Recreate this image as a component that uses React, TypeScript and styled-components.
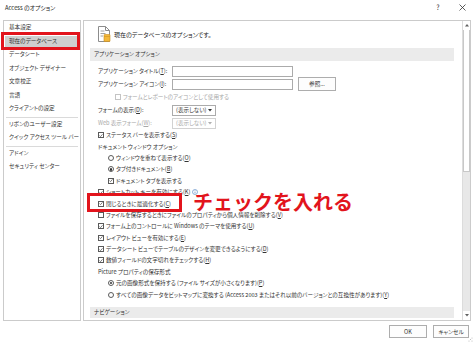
import React from 'react';
import styled, { createGlobalStyle } from 'styled-components';

const Global = createGlobalStyle`
  html, body { margin: 0; padding: 0; background: #fff; }
  body {
    font-family: "Noto Sans CJK JP", "Noto Sans", sans-serif;
    font-feature-settings: "palt";
    color: #333;
  }
  * { box-sizing: border-box; }
  u { text-underline-offset: 0.5px; }
`;

const Window = styled.div`
  width: 474px;
  height: 343px;
  display: flex;
  flex-direction: column;
  background: #fff;
  overflow: hidden;
  position: relative;
`;

const TitleBar = styled.div`
  height: 20px;
  flex: none;
  display: flex;
  align-items: flex-start;
  padding: 3px 0 0 5px;
  font-size: 5.8px;
  line-height: 9px;
  color: #222;
  white-space: nowrap;
`;

const TitleText = styled.div`
  flex: 1;
`;

const TitleButton = styled.div<{ $w: number }>`
  width: ${(p) => p.$w}px;
  height: 9px;
  display: flex;
  align-items: center;
  justify-content: center;
  font-size: 7px;
  color: #333;
`;

const Body = styled.div`
  height: 301px;
  flex: none;
  display: flex;
  gap: 2px;
  padding: 0 3px;
`;

const Sidebar = styled.div`
  width: 78px;
  flex: none;
  border: 1px solid #cbcbcb;
  display: flex;
  flex-direction: column;
  gap: 2.5px;
  padding-top: 1px;
  font-size: 5.6px;
  position: relative;
`;

const NavItem = styled.div<{ $selected?: boolean }>`
  height: 11px;
  line-height: 11px;
  margin: 0 1px;
  padding-left: 4px;
  white-space: nowrap;
  position: relative;
  color: #333;
  background: ${(p) => (p.$selected ? '#cfcfcf' : 'transparent')};
`;

const NavSeparator = styled.div`
  height: 1px;
  margin: 0 2px -1.5px 2px;
  background: #dadada;
`;

const RedBox = styled.div<{ $l: number; $t: number; $w: number; $h: number }>`
  position: absolute;
  left: ${(p) => p.$l}px;
  top: ${(p) => p.$t}px;
  width: ${(p) => p.$w}px;
  height: ${(p) => p.$h}px;
  border: 3px solid #e2141c;
  pointer-events: none;
`;

const Content = styled.div`
  flex: 1;
  border: 1px solid #cbcbcb;
  display: flex;
  overflow: hidden;
`;

const ScrollArea = styled.div`
  flex: 1;
  padding: 0 8px 0 6px;
  overflow: hidden;
  font-size: 5.6px;
  white-space: nowrap;
`;

const Header = styled.div`
  height: 25px;
  margin-bottom: 2px;
  display: flex;
  align-items: center;
  gap: 3px;
  padding-left: 7px;
  padding-top: 1px;
  font-size: 6px;
  color: #222;
`;

const Band = styled.div<{ $h: number }>`
  height: ${(p) => p.$h}px;
  line-height: ${(p) => p.$h}px;
  background: #ebebeb;
  padding-left: 4px;
  color: #333;
`;

const Form = styled.div`
  padding: 3.5px 0 0 8px;
`;

const FieldRow = styled.div`
  height: 13px;
  display: flex;
  align-items: center;
`;

const Label = styled.div<{ $disabled?: boolean }>`
  width: 74px;
  flex: none;
  color: ${(p) => (p.$disabled ? '#a8a8a8' : '#333')};
`;

const TextInput = styled.div`
  width: 121px;
  height: 11px;
  border: 1px solid #ababab;
  background: #fff;
`;

const PushButton = styled.div<{ $w: number; $ml?: number }>`
  width: ${(p) => p.$w}px;
  height: ${(p) => (p.$ml ? 14 : 13)}px;
  margin-left: ${(p) => p.$ml ?? 0}px;
  border: 1px solid #adadad;
  background: #fdfdfd;
  display: flex;
  align-items: center;
  justify-content: center;
  font-size: 5.6px;
  color: #333;
`;

const Select = styled.div<{ $disabled?: boolean }>`
  width: 44px;
  height: 11px;
  border: 1px solid ${(p) => (p.$disabled ? '#d2d2d2' : '#ababab')};
  display: flex;
  align-items: center;
  justify-content: space-between;
  padding: 0 3px 0 3px;
  color: ${(p) => (p.$disabled ? '#a8a8a8' : '#333')};
`;

const Row = styled.div<{ $indent: number; $disabled?: boolean }>`
  height: 11.4px;
  display: flex;
  align-items: center;
  padding-left: ${(p) => p.$indent}px;
  gap: 2px;
  position: relative;
  color: ${(p) => (p.$disabled ? '#a8a8a8' : '#333')};
`;

const Text = styled.span``;

const Box = styled.span<{ $disabled?: boolean }>`
  width: 6px;
  height: 6px;
  flex: none;
  border: 1px solid ${(p) => (p.$disabled ? '#c4c4c4' : '#5a5a5a')};
  background: #fff;
  display: flex;
  align-items: center;
  justify-content: center;
`;

const Round = styled(Box)`
  border-radius: 50%;
`;

const Dot = styled.span`
  width: 2.4px;
  height: 2.4px;
  border-radius: 50%;
  background: #333;
`;

const Annotation = styled.div`
  position: absolute;
  left: 95px;
  top: -3.6px;
  font-size: 20px;
  line-height: 16px;
  font-weight: 700;
  letter-spacing: 0;
  color: #e2141c;
  font-feature-settings: normal;
`;

const Scrollbar = styled.div`
  width: 8px;
  flex: none;
  display: flex;
  flex-direction: column;
  background: #e8e8e8;
  border-left: 1px solid #dcdcdc;
`;

const Arrow = styled.div`
  height: 9px;
  flex: none;
  background: #fff;
  display: flex;
  align-items: center;
  justify-content: center;
`;

const Thumb = styled.div`
  height: 142px;
  flex: none;
  background: #fff;
  border: 1px solid #c8c8c8;
  border-top: none;
`;

const Track = styled.div`
  flex: 1;
`;

const Footer = styled.div`
  height: 22px;
  flex: none;
  display: flex;
  justify-content: flex-end;
  align-items: flex-start;
  gap: 6px;
  padding: 4px 5px 0 0;
`;

const Grip = styled.svg`
  position: absolute;
  right: 1px;
  bottom: 1px;
`;

const Check = ({ on = true, disabled }: { on?: boolean; disabled?: boolean }) => (
  <Box $disabled={disabled}>
    {on && (
      <svg width="5" height="5" viewBox="0 0 5 5">
        <polyline points="0.6,2.6 1.9,3.9 4.4,1" fill="none" stroke="#333" strokeWidth="0.8" />
      </svg>
    )}
  </Box>
);

const Radio = ({ on }: { on?: boolean }) => <Round>{on && <Dot />}</Round>;

const Key = ({ k }: { k: string }) => (
  <>
    (<u>{k}</u>)
  </>
);

const navTop = ['基本設定', '現在のデータベース', 'データシート', 'オブジェクト デザイナー', '文章校正', '言語', 'クライアントの設定'];

export default function App() {
  return (
    <Window>
      <Global />
      <TitleBar>
        <TitleText>Access のオプション</TitleText>
        <TitleButton $w={12}>?</TitleButton>
        <TitleButton $w={12} style={{ marginLeft: 12, marginRight: 6 }}>
          <svg width="7" height="7" viewBox="0 0 7 7">
            <path d="M0.5 0.5L6.5 6.5M6.5 0.5L0.5 6.5" stroke="#333" strokeWidth="0.8" />
          </svg>
        </TitleButton>
      </TitleBar>
      <Body>
        <Sidebar>
          {navTop.map((n, i) => (
            <NavItem key={n} $selected={i === 1}>
              {n}
              {i === 1 && <RedBox $l={-4} $t={-3.5} $w={79} $h={18} />}
            </NavItem>
          ))}
          <NavSeparator />
          <NavItem>リボンのユーザー設定</NavItem>
          <NavItem>クイック アクセス ツール バー</NavItem>
          <NavSeparator />
          <NavItem>アドイン</NavItem>
          <NavItem>セキュリティ センター</NavItem>
        </Sidebar>
        <Content>
          <ScrollArea>
            <Header>
              <svg width="14" height="16" viewBox="0 0 14 16">
                <path d="M1.5 0.5h7l4 4v11h-11z" fill="#fff" stroke="#8c8c8c" />
                <path d="M8.5 0.5v4h4" fill="none" stroke="#8c8c8c" />
                <path d="M3.5 5h4M3.5 7.5h5M3.5 10h2.5" stroke="#a0a0a0" />
                <rect x="7" y="8.5" width="6" height="7" rx="0.6" fill="#f3b83a" stroke="#c98d1c" strokeWidth="0.6" />
                <path d="M7 10.5h6" stroke="#c98d1c" strokeWidth="0.5" />
              </svg>
              <span>現在のデータベースのオプションです。</span>
            </Header>
            <Band $h={13}>アプリケーション オプション</Band>
            <Form>
              <FieldRow>
                <Label>アプリケーション タイトル<Key k="T" />:</Label>
                <TextInput />
              </FieldRow>
              <FieldRow>
                <Label>アプリケーション アイコン<Key k="I" />:</Label>
                <TextInput />
                <PushButton $w={38} $ml={5}>参照...</PushButton>
              </FieldRow>
              <FieldRow>
                <Row $indent={17} $disabled>
                  <Check on={false} disabled />
                  <Text>フォームとレポートのアイコンとして使用する</Text>
                </Row>
              </FieldRow>
              <FieldRow>
                <Label>フォームの表示<Key k="D" />:</Label>
                <Select>
                  <span>(表示しない)</span>
                  <svg width="4" height="3" viewBox="0 0 4 3"><path d="M0 0h4L2 2.5z" fill="#333" /></svg>
                </Select>
              </FieldRow>
              <FieldRow>
                <Label $disabled>Web 表示フォーム<Key k="W" />:</Label>
                <Select $disabled>
                  <span>(表示しない)</span>
                  <svg width="4" height="3" viewBox="0 0 4 3"><path d="M0 0h4L2 2.5z" fill="#b0b0b0" /></svg>
                </Select>
              </FieldRow>
              <Row $indent={0}><Check /><Text>ステータス バーを表示する<Key k="S" /></Text></Row>
              <Row $indent={0}><Text>ドキュメント ウィンドウ オプション</Text></Row>
              <Row $indent={10}><Radio /><Text>ウィンドウを重ねて表示する<Key k="O" /></Text></Row>
              <Row $indent={10}><Radio on /><Text>タブ付きドキュメント<Key k="B" /></Text></Row>
              <Row $indent={10}><Check /><Text>ドキュメント タブを表示する</Text></Row>
              <Row $indent={0}>
                <Check />
                <Text>ショートカット キーを有効にする<Key k="K" /></Text>
                <svg width="6" height="6" viewBox="0 0 6 6">
                  <circle cx="3" cy="3" r="2.5" fill="none" stroke="#4a7fc1" strokeWidth="0.6" />
                  <path d="M3 2.6v1.8M3 1.5v0.5" stroke="#4a7fc1" strokeWidth="0.7" />
                </svg>
              </Row>
              <Row $indent={0}>
                <Check />
                <Text>閉じるときに最適化する<Key k="C" /></Text>
                <RedBox $l={-11} $t={-5} $w={95} $h={19} />
                <Annotation>チェックを入れる</Annotation>
              </Row>
              <Row $indent={0}><Check on={false} /><Text>ファイルを保存するときにファイルのプロパティから個人情報を削除する<Key k="V" /></Text></Row>
              <Row $indent={0}><Check /><Text>フォーム上のコントロールに Windows のテーマを使用する<Key k="U" /></Text></Row>
              <Row $indent={0}><Check /><Text>レイアウト ビューを有効にする<Key k="E" /></Text></Row>
              <Row $indent={0}><Check /><Text>データシート ビューでテーブルのデザインを変更できるようにする<Key k="D" /></Text></Row>
              <Row $indent={0}><Check /><Text>数値フィールドの文字切れをチェックする<Key k="H" /></Text></Row>
              <Row $indent={0}><Text>Picture プロパティの保存形式</Text></Row>
              <Row $indent={10}><Radio on /><Text>元の画像形式を保持する (ファイル サイズが小さくなります)<Key k="P" /></Text></Row>
              <Row $indent={10}><Radio /><Text>すべての画像データをビットマップに変換する (Access 2003 またはそれ以前のバージョンとの互換性があります)<Key k="Y" /></Text></Row>
            </Form>
            <div style={{ height: 6.5 }} />
            <Band $h={11}>ナビゲーション</Band>
          </ScrollArea>
          <Scrollbar>
            <Arrow>
              <svg width="4" height="3" viewBox="0 0 4 3"><path d="M0 2.5h4L2 0z" fill="#606060" /></svg>
            </Arrow>
            <Thumb />
            <Track />
            <Arrow>
              <svg width="4" height="3" viewBox="0 0 4 3"><path d="M0 0h4L2 2.5z" fill="#606060" /></svg>
            </Arrow>
          </Scrollbar>
        </Content>
      </Body>
      <Footer>
        <PushButton $w={38}>OK</PushButton>
        <PushButton $w={36}>キャンセル</PushButton>
      </Footer>
      <Grip width="5" height="5" viewBox="0 0 5 5">
        <circle cx="4" cy="1" r="0.5" fill="#aaa" />
        <circle cx="4" cy="4" r="0.5" fill="#aaa" />
        <circle cx="1" cy="4" r="0.5" fill="#aaa" />
        <circle cx="2.5" cy="2.5" r="0.5" fill="#aaa" />
      </Grip>
    </Window>
  );
}
